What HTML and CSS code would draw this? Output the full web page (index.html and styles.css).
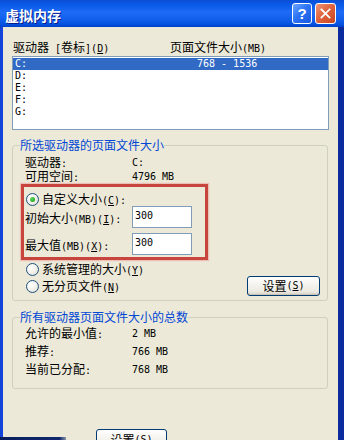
FILE: index.html
```html
<!DOCTYPE html>
<html lang="zh-CN">
<head>
<meta charset="utf-8">
<title>虚拟内存</title>
<link rel="stylesheet" href="styles.css">
</head>
<body>
<div class="window">
  <div class="titlebar">
    <span class="title">虚拟内存</span>
    <div class="tb-btns">
      <span class="tb-btn help">?</span>
      <span class="tb-btn close">
        <svg width="21" height="21" viewBox="0 0 21 21"><path d="M6 6 L15 15 M15 6 L6 15" stroke="#fff" stroke-width="2" stroke-linecap="square"/></svg>
      </span>
    </div>
  </div>
  <div class="frame">
    <div class="cols">
      <span class="col1">驱动器<span class="a"> [</span>卷标<span class="a">](<u>D</u>)</span></span>
      <span class="col2">页面文件大小<span class="a">(MB)</span></span>
    </div>
    <div class="listbox a">
      <div class="row sel"><span class="drv">C:</span><span>768 - 1536</span></div>
      <div class="row"><span class="drv">D:</span></div>
      <div class="row"><span class="drv">E:</span></div>
      <div class="row"><span class="drv">F:</span></div>
      <div class="row"><span class="drv">G:</span></div>
    </div>

    <fieldset class="group g1">
      <legend>所选驱动器的页面文件大小</legend>
      <div class="kv"><span class="k">驱动器<span class="a">:</span></span><span class="a">C:</span></div>
      <div class="kv"><span class="k">可用空间<span class="a">:</span></span><span class="a">4796 MB</span></div>
      <div class="mark">
        <div class="radio-row r-custom"><span class="radio on"></span><span>自定义大小<span class="a">(<u>C</u>):</span></span></div>
        <div class="field-row"><span class="k">初始大小<span class="a">(MB)(<u>I</u>):</span></span><span class="input a">300</span></div>
        <div class="field-row second"><span class="k">最大值<span class="a">(MB)(<u>X</u>):</span></span><span class="input a">300</span></div>
      </div>
      <div class="radio-row r-sys"><span class="radio"></span><span>系统管理的大小<span class="a">(<u>Y</u>)</span></span></div>
      <div class="radio-row r-none">
        <span class="rlabel"><span class="radio"></span><span>无分页文件<span class="a">(<u>N</u>)</span></span></span>
        <span class="btn set">设置<span class="a">(<u>S</u>)</span></span>
      </div>
    </fieldset>

    <fieldset class="group g2">
      <legend>所有驱动器页面文件大小的总数</legend>
      <div class="kv"><span class="k">允许的最小值<span class="a">:</span></span><span class="a">2 MB</span></div>
      <div class="kv"><span class="k">推荐<span class="a">:</span></span><span class="a">766 MB</span></div>
      <div class="kv"><span class="k">当前已分配<span class="a">:</span></span><span class="a">768 MB</span></div>
    </fieldset>

    <div class="footer">
      <span class="btn ok">设置<span class="a">(<u>S</u>)</span></span>
    </div>
  </div>
  <div class="under-edge"></div>
</div>
</body>
</html>
```

FILE: styles.css
```css
* { box-sizing: border-box; }
html, body { margin: 0; padding: 0; }
body {
  width: 344px;
  height: 440px;
  overflow: hidden;
  background: #ECE9D8;
  font-family: "Noto Sans CJK SC", sans-serif;
  font-size: 12px;
  color: #000;
}
u { text-decoration: underline; text-underline-offset: 1px; }
.a { font-family: "DejaVu Sans Mono", monospace; font-size: 10px; }

.window {
  position: relative;
  width: 344px;
  height: 440px;
  display: flex;
  flex-direction: column;
  overflow: hidden;
}

/* title bar */
.titlebar {
  flex: none;
  height: 27px;
  display: flex;
  align-items: center;
  justify-content: space-between;
  padding: 0 8px 0 5px;
  background: linear-gradient(to bottom, #0A4FD6 0%, #0B5BEA 20%, #1E6CF5 45%, #0F5EEB 75%, #0450DC 92%, #0040C8 100%);
}
.title {
  color: #fff;
  font-weight: bold;
  font-size: 14px;
  line-height: 16px;
  padding-top: 3px;
  text-shadow: 1px 1px 0 #0A1C8A;
}
.tb-btns { display: flex; gap: 3px; }
.tb-btn {
  width: 21px;
  height: 21px;
  border: 1px solid #fff;
  border-radius: 3px;
  display: flex;
  align-items: center;
  justify-content: center;
  overflow: hidden;
}
.help {
  width: 20px;
  color: #fff;
  font-family: "Liberation Sans", sans-serif;
  font-weight: bold;
  font-size: 15px;
  background: linear-gradient(135deg, #6AA5FF 0%, #2D74F5 45%, #1A58E0 100%);
}
.close {
  background: linear-gradient(135deg, #F0977A 0%, #E0643E 45%, #C8461E 100%);
}
.close svg { display: block; }

/* frame body */
.frame {
  flex: 1;
  border-left: 3px solid #1444D8;
  border-right: 6px solid #0A2A9E;
  padding: 13px 9px 0 9px;
  overflow: hidden;
}
.cols {
  display: flex;
  height: 14px;
  line-height: 14px;
  padding-left: 1px;
  white-space: nowrap;
}
.col1 { width: 157px; flex: none; }

.listbox {
  margin-top: 2px;
  height: 74px;
  border: 1px solid #7F9DB9;
  background: #fff;
  padding: 1px 0;
}
.row {
  height: 12px;
  line-height: 12px;
  display: flex;
  padding-left: 2px;
  white-space: nowrap;
}
.row.sel { background: #316AC5; color: #fff; }
.drv { width: 182px; flex: none; }

/* group boxes */
.group {
  margin: 8px 1px 0 0;
  padding: 4px 0 4px 7px;
  border: 1px solid #D0D0BF;
  border-radius: 3px;
  min-width: 0;
}
.group legend {
  padding: 0;
  color: #0046D5;
  height: 14px;
  line-height: 14px;
}
.g2 { margin-top: 9px; padding-top: 1px; padding-bottom: 9px; }

.kv {
  display: flex;
  align-items: center;
  line-height: 14px;
  height: 14px;
  padding-left: 5px;
  white-space: nowrap;
}
.g2 .kv { height: 18px; line-height: 18px; }
.k { width: 107px; flex: none; }

.mark {
  margin-left: 1px;
  width: 187px;
  border: 3px solid #C8453D;
  box-shadow: 0 0 1px 1px rgba(235, 150, 150, 0.5);
  padding: 6px 0 2px 1px;
}
.radio-row {
  display: flex;
  align-items: center;
  gap: 3px;
  height: 13px;
  line-height: 13px;
  white-space: nowrap;
}
.radio {
  width: 13px;
  height: 13px;
  flex: none;
  margin-left: 1px;
  border: 1px solid #1C5180;
  border-radius: 50%;
  background: radial-gradient(circle at 35% 35%, #FFFFFF 0%, #F4F3EE 45%, #D8D5C8 100%);
  display: flex;
  align-items: center;
  justify-content: center;
}
.radio.on::after {
  content: "";
  width: 5px;
  height: 5px;
  border-radius: 50%;
  background: radial-gradient(circle at 35% 35%, #62D862 0%, #21A121 80%);
}
.field-row {
  display: flex;
  align-items: center;
  height: 22px;
  white-space: nowrap;
}
.field-row.second { margin-top: 5px; }
.input {
  width: 60px;
  height: 22px;
  border: 1px solid #7F9DB9;
  background: #fff;
  padding: 2px 0 0 2px;
  line-height: 14px;
}

.r-sys { margin-top: 2px; height: 14px; padding-left: 5px; }
.r-none {
  height: 20px;
  padding-left: 5px;
  padding-right: 7px;
  justify-content: space-between;
}
.rlabel { display: flex; align-items: center; gap: 3px; }

.btn {
  display: flex;
  align-items: center;
  justify-content: center;
  border: 1px solid #003C74;
  border-radius: 3px;
  background: linear-gradient(to bottom, #FFFFFF 0%, #F5F4EF 40%, #ECEAE2 80%, #D6D0C5 100%);
  box-shadow: inset 0 -1px 0 #C9C4B5;
  white-space: nowrap;
}
.set { width: 73px; height: 20px; line-height: 14px; }

.footer {
  margin-top: 40px;
  padding-left: 84px;
}
.ok { width: 71px; height: 22px; line-height: 14px; }

/* fragment of another window's edge overlapping the bottom-left corner */
.under-edge {
  position: absolute;
  left: 0;
  bottom: 0;
  width: 66px;
  height: 3px;
  background: linear-gradient(to right, #0A1E5C 0%, #10286E 90%, #8A93A8 100%);
}
```
